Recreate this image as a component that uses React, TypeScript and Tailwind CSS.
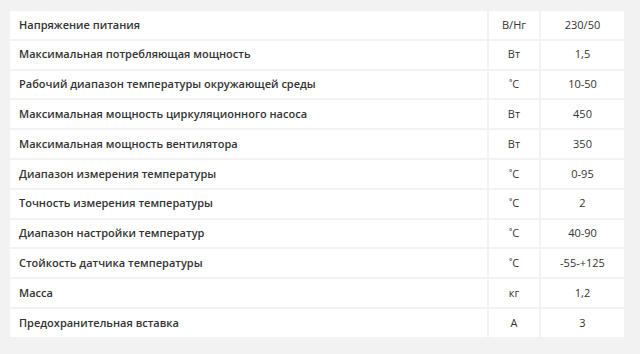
import React from 'react';

const rows: [string, string, string][] = [
  ['Напряжение питания', 'В/Hг', '230/50'],
  ['Максимальная потребляющая мощность', 'Вт', '1,5'],
  ['Рабочий диапазон температуры окружающей среды', '˚С', '10-50'],
  ['Максимальная мощность циркуляционного насоса', 'Вт', '450'],
  ['Максимальная мощность вентилятора', 'Вт', '350'],
  ['Диапазон измерения температуры', '˚С', '0-95'],
  ['Точность измерения температуры', '˚С', '2'],
  ['Диапазон настройки температур', '˚С', '40-90'],
  ['Стойкость датчика температуры', '˚С', '-55-+125'],
  ['Масса', 'кг', '1,2'],
  ['Предохранительная вставка', 'А', '3'],
];

function App() {
  return (
    <div className="min-h-screen bg-[#f2f2f2] pl-[10px] pt-[11px] font-['Open_Sans',sans-serif] text-[#333]">
      <div className="grid w-[614px] grid-cols-[477px_50px_83px] gap-[2px]">
        {rows.map(([name, unit, value]) => (
          <React.Fragment key={name}>
            <div className="flex h-[27.8px] items-center bg-white pl-[9px] text-[11px] font-semibold">
              {name}
            </div>
            <div className="flex h-[27.8px] items-center justify-center bg-white text-[11px]">
              {unit}
            </div>
            <div className="flex h-[27.8px] items-center justify-center bg-white text-[11px]">
              {value}
            </div>
          </React.Fragment>
        ))}
      </div>
    </div>
  );
}

export default App;
